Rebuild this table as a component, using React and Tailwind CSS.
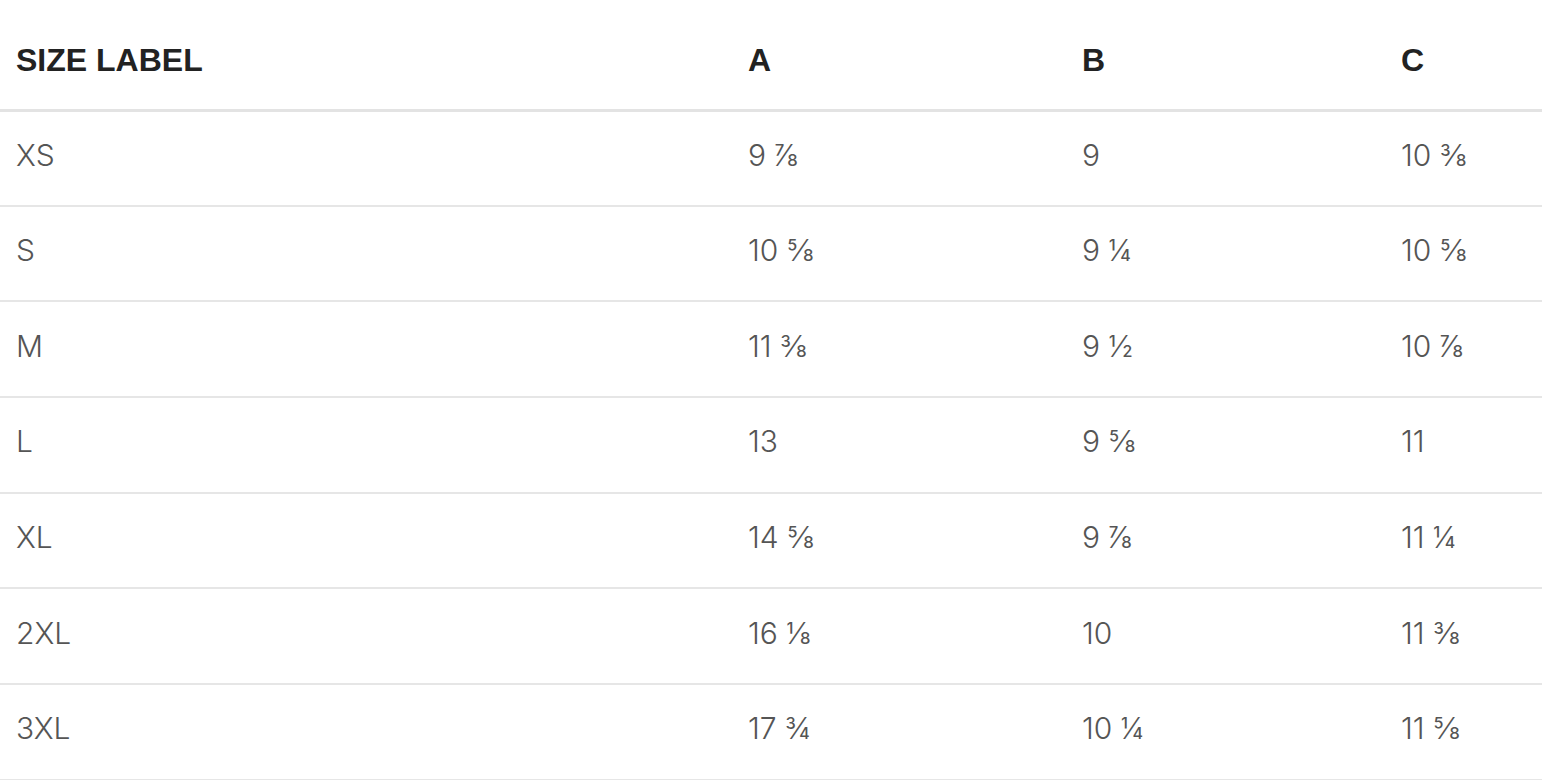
const columns = ["SIZE LABEL", "A", "B", "C"];

const rows = [
    ["XS", "9 ⅞", "9", "10 ⅜"],
    ["S", "10 ⅝", "9 ¼", "10 ⅝"],
    ["M", "11 ⅜", "9 ½", "10 ⅞"],
    ["L", "13", "9 ⅝", "11"],
    ["XL", "14 ⅝", "9 ⅞", "11 ¼"],
    ["2XL", "16 ⅛", "10", "11 ⅜"],
    ["3XL", "17 ¾", "10 ¼", "11 ⅝"],
];

const colWidths = ["w-[732px]", "w-[334px]", "w-[319px]", ""];

export default function App() {
    return (
        <div className="w-[1542px] bg-white">
            <table className="w-full border-collapse table-fixed">
                <thead>
                    <tr className="border-b-[3px] border-[#e3e3e3]">
                        {columns.map((col, i) => (
                            <th
                                key={col}
                                className={`${colWidths[i]} h-[110px] pl-4 pt-[11px] text-left align-middle font-bold text-[32px] text-[#222] font-['Liberation_Sans',Arial,sans-serif]`}
                            >
                                {col}
                            </th>
                        ))}
                    </tr>
                </thead>
                <tbody>
                    {rows.map((row, rowIndex) => (
                        <tr key={rowIndex} className="border-b-2 border-[#e6e6e6]">
                            {row.map((cell, cellIndex) => (
                                <td
                                    key={cellIndex}
                                    className="h-[95.7px] pl-4 pb-[6px] align-middle text-[30px] text-[#555] font-['Inter','Lato',sans-serif] font-light"
                                >
                                    {cell}
                                </td>
                            ))}
                        </tr>
                    ))}
                </tbody>
            </table>
        </div>
    );
}
